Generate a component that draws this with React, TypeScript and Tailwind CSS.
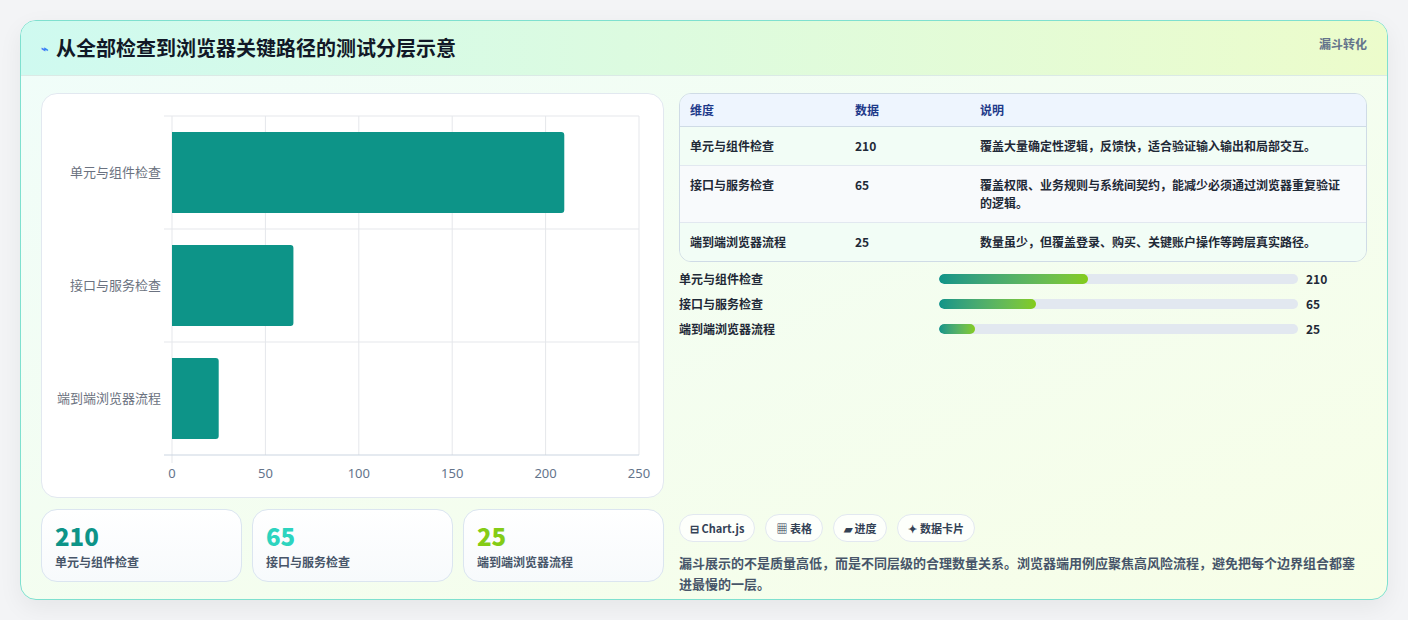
const font = { fontFamily: '"Noto Sans CJK SC", "Noto Sans", sans-serif' };

const rows = [
  { name: "单元与组件检查", value: 210, note: "覆盖大量确定性逻辑，反馈快，适合验证输入输出和局部交互。", pct: 41.5, color: "text-[#0d9488]" },
  { name: "接口与服务检查", value: 65, note: "覆盖权限、业务规则与系统间契约，能减少必须通过浏览器重复验证的逻辑。", pct: 27, color: "text-[#2dd4bf]" },
  { name: "端到端浏览器流程", value: 25, note: "数量虽少，但覆盖登录、购买、关键账户操作等跨层真实路径。", pct: 10, color: "text-[#84cc16]" },
];

function Chart() {
  const x0 = 130;
  const w = 467;
  const top = 22;
  const rh = 113;
  return (
    <svg width="623" height="403" className="block">
      {[0, 50, 100, 150, 200, 250].map((t, i) => {
        const x = x0 + (w * i) / 5;
        return (
          <g key={t}>
            <line x1={x} y1={top} x2={x} y2={top + rh * 3 + (i === 0 ? 8 : 0)} stroke="#e5e7eb" />
            <text x={x} y={384} textAnchor="middle" fontSize="13" fill="#64748b" fontFamily="Noto Sans, sans-serif">
              {t}
            </text>
          </g>
        );
      })}
      {[0, 1, 2, 3].map((i) => (
        <line key={i} x1={i === 3 ? x0 - 8 : x0 - 8} y1={top + rh * i} x2={x0 + w} y2={top + rh * i} stroke={i === 3 ? "#cbd5e1" : "#e5e7eb"} />
      ))}
      {rows.map((r, i) => {
        const bw = (r.value / 250) * w;
        const y = top + rh * i + 16;
        return (
          <g key={r.name}>
            <path d={`M${x0} ${y} h${bw - 3} a3 3 0 0 1 3 3 v75 a3 3 0 0 1 -3 3 h${-(bw - 3)} z`} fill="#0d9488" />
            <text x={119} y={top + rh * i + 61} textAnchor="end" fontSize="13" fill="#6b7280" fontFamily='"Noto Sans CJK SC", sans-serif'>
              {r.name}
            </text>
          </g>
        );
      })}
    </svg>
  );
}

export default function App() {
  return (
    <div className="min-h-[620px] bg-[#f3f4f6] pt-5 px-5" style={font}>
      <div className="rounded-2xl border border-[#7fe0cf] overflow-hidden shadow-[0_8px_24px_rgba(0,0,0,0.06)] bg-gradient-to-br from-[#f0fdfa] to-[#f7fee7] h-[580px]">
        <div className="h-[55px] flex items-start justify-between px-5 border-b border-[#dbeae6] bg-gradient-to-r from-[#cffaf0] to-[#ecfccb]">
          <div className="flex items-center gap-2 h-full">
            <span className="text-[#3b82f6] text-xs font-bold">⌁</span>
            <h1 className="text-[20px] font-bold text-[#111827]">从全部检查到浏览器关键路径的测试分层示意</h1>
          </div>
          <span className="mt-[15px] text-xs font-bold text-[#64748b]">漏斗转化</span>
        </div>
        <div className="flex gap-[15px] px-5 pt-[17px]">
          <div className="w-[623px] flex flex-col gap-[11px]">
            <div className="rounded-2xl border border-[#e2e8f0] bg-white">
              <Chart />
            </div>
            <div className="grid grid-cols-3 gap-[10px]">
              {rows.map((r) => (
                <div key={r.name} className="h-[73px] rounded-2xl border border-[#dbe5f0] bg-gradient-to-b from-white to-[#f7fafc] px-[13px] pt-[11px]">
                  <div className={`text-[24px] leading-[30px] font-extrabold ${r.color}`}>{r.value}</div>
                  <div className="text-xs font-semibold text-[#475569] mt-[3px]">{r.name}</div>
                </div>
              ))}
            </div>
          </div>
          <div className="flex-1 flex flex-col">
            <div className="rounded-xl border border-[#cfdbe6] overflow-hidden text-xs">
              <div className="grid grid-cols-[165px_125px_1fr] h-[33px] items-center bg-[#eef5fe] border-b border-[#cfdbe6] px-[10px] font-bold text-[#1e3a8a]">
                <span>维度</span>
                <span>数据</span>
                <span>说明</span>
              </div>
              {rows.map((r, i) => (
                <div
                  key={r.name}
                  className={`grid grid-cols-[165px_125px_1fr] px-[10px] py-[10px] leading-[18px] font-semibold text-[#1f2937] ${i === 1 ? "bg-[#f8fafc]" : "bg-[#f2fdf6]"} ${i < 2 ? "border-b border-[#e2e8f0]" : ""}`}
                >
                  <span>{r.name}</span>
                  <span>{r.value}</span>
                  <span className="pr-3">{r.note}</span>
                </div>
              ))}
            </div>
            <div className="mt-[9px] flex flex-col gap-[9px]">
              {rows.map((r) => (
                <div key={r.name} className="flex items-center h-4 text-xs font-bold text-[#1f2937]">
                  <span className="w-[260px]">{r.name}</span>
                  <div className="w-[359px] h-[10px] rounded-full bg-[#e2e8f0] overflow-hidden">
                    <div className="h-full rounded-full bg-gradient-to-r from-[#0d9488] to-[#84cc16]" style={{ width: `${r.pct}%` }} />
                  </div>
                  <span className="ml-2">{r.value}</span>
                </div>
              ))}
            </div>
            <div className="mt-[177px] flex gap-[10px]">
              {["⊟ Chart.js", "▦ 表格", "▰ 进度", "✦ 数据卡片"].map((c) => (
                <span key={c} className="h-[28px] px-[10px] flex items-center rounded-full border border-[#e2e8f0] bg-white/80 text-[11px] font-bold text-[#334155]">
                  {c}
                </span>
              ))}
            </div>
            <p className="mt-[10px] text-[13px] leading-[21px] font-semibold text-[#475569]">
              漏斗展示的不是质量高低，而是不同层级的合理数量关系。浏览器端用例应聚焦高风险流程，避免把每个边界组合都塞进最慢的一层。
            </p>
          </div>
        </div>
      </div>
    </div>
  );
}
